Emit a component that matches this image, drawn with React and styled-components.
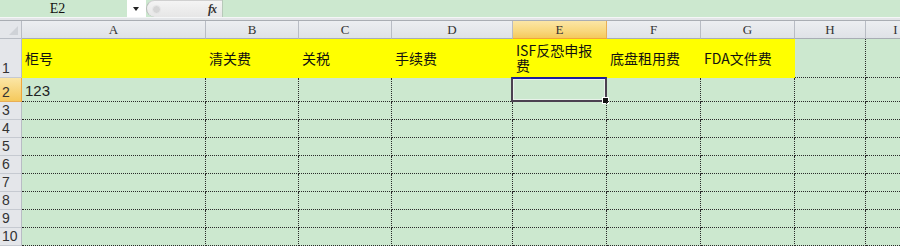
import React from 'react';
import styled, { createGlobalStyle, css } from 'styled-components';

const GlobalStyle = createGlobalStyle`
  html, body {
    margin: 0;
    padding: 0;
    background: #cce8cf;
    overflow: hidden;
  }
  body {
    font-family: "Liberation Sans", "Noto Sans CJK SC", sans-serif;
  }
`;

// widths of row header + columns A..I
const COLS = '22px 184px 93px 93px 121px 94px 94px 94px 71px 60px';
const LETTERS = ['A', 'B', 'C', 'D', 'E', 'F', 'G', 'H', 'I'];
const HEADERS = ['柜号', '清关费', '关税', '手续费', 'ISF反恐申报费', '底盘租用费', 'FDA文件费'];

const Sheet = styled.div`
  width: 900px;
  height: 246px;
  overflow: hidden;
  display: flex;
  flex-direction: column;
`;

const FormulaBar = styled.div`
  height: 17px;
  display: flex;
  align-items: stretch;
`;

const NameBox = styled.div`
  width: 127px;
  display: flex;
  align-items: center;
  justify-content: center;
  font-family: "Liberation Serif", serif;
  font-size: 14px;
  color: #111;
  padding-right: 12px;
  box-sizing: border-box;
`;

const DropZone = styled.div`
  width: 19px;
  background: #fff;
  display: flex;
  align-items: center;
  justify-content: center;
  padding-right: 2px;
  box-sizing: border-box;
`;

const Arrow = styled.div`
  width: 0;
  height: 0;
  border-left: 3.5px solid transparent;
  border-right: 3.5px solid transparent;
  border-top: 4px solid #222;
  margin-top: 1px;
`;

const FxPill = styled.div`
  width: 76px;
  background: linear-gradient(#f4f4f4, #e6e6e6);
  border-radius: 9px 0 0 9px;
  border-left: 1px solid #b9b9b9;
  border-top: 1px solid #d0d0d0;
  box-sizing: border-box;
  display: flex;
  align-items: center;
  justify-content: space-between;
  padding: 0 6px 0 5px;
`;

const Knob = styled.div`
  width: 7px;
  height: 7px;
  border-radius: 50%;
  background: #d5d5d5;
  border: 1px solid #e9e9e9;
`;

const Fx = styled.span`
  font-family: "Liberation Serif", serif;
  font-style: italic;
  font-weight: bold;
  font-size: 12px;
  color: #333;
  letter-spacing: -1px;
`;

const FormulaInput = styled.div`
  flex: 1;
  border-left: 1px solid #b7c9b9;
`;

const Separator = styled.div`
  height: 4px;
  background: #e3e5e8;
  border-top: 1px solid #f5f6f7;
  border-bottom: 1px solid #a9adb3;
  box-sizing: border-box;
`;

const Row = styled.div`
  display: grid;
  grid-template-columns: ${COLS};
  height: ${p => p.$h}px;
  flex-shrink: 0;
`;

const CornerCell = styled.div`
  position: relative;
  background: #e4e6ea;
  border-right: 1px solid #b8bcc4;
  border-bottom: 1px solid #b8bcc4;
  &::after {
    content: '';
    position: absolute;
    right: 3px;
    bottom: 3px;
    width: 0;
    height: 0;
    border-left: 9px solid transparent;
    border-bottom: 9px solid #cfd2d7;
  }
`;

const selectedHead = css`
  background: linear-gradient(#fbe6a6, #f8d77c 60%, #f5c95c);
  border-bottom-color: #f0a53a;
  border-right-color: #e9ae55;
`;

const ColHead = styled.div`
  background: linear-gradient(#eceef1, #dfe2e7);
  border-right: 1px solid #b8bcc4;
  border-bottom: 1px solid #a8adb5;
  display: flex;
  align-items: center;
  justify-content: center;
  font-family: "Liberation Serif", serif;
  font-size: 13px;
  color: #333;
  ${p => p.$sel && selectedHead}
`;

const RowHead = styled.div`
  background: #e4e6ea;
  border-right: 1px solid #b8bcc4;
  border-bottom: 1px solid #c6cad1;
  display: flex;
  align-items: flex-end;
  padding-left: 2px;
  font-family: "Liberation Sans", sans-serif;
  font-size: 14px;
  line-height: 17px;
  color: #333;
  ${p => p.$sel && css`
    background: linear-gradient(#fbe6a6, #f5c95c);
    border-bottom-color: #e9ae55;
    border-right-color: #f0a53a;
  `}
`;

const Cell = styled.div`
  position: relative;
  border-right: 1px dotted #2a2a2a;
  border-bottom: 1px dotted #2a2a2a;
  box-sizing: border-box;
  display: flex;
  align-items: ${p => (p.$center ? 'center' : 'flex-end')};
  padding: 0 2px 0 3px;
  font-size: 14px;
  line-height: 15px;
  color: #111;
  white-space: pre-wrap;
  overflow: visible;
  ${p => p.$yellow && css`
    background: #ffff00;
    border-color: transparent;
  `}
`;

const CellText = styled.span`
  font-family: "Noto Sans CJK SC", "Liberation Sans", sans-serif;
  word-break: break-all;
  margin-bottom: ${p => p.$mb || 0}px;
`;

const NumText = styled.span`
  font-family: "Liberation Sans", sans-serif;
  font-size: 15px;
  color: #222;
  margin-bottom: 3px;
`;

const Selection = styled.div`
  position: absolute;
  left: -2px;
  top: -1px;
  right: -1px;
  bottom: -1px;
  border: 2px solid #4b4150;
  border-top-color: #1e1e9c;
  box-shadow: inset 0 0 0 1px #e8f2ea;
  pointer-events: none;
  &::after {
    content: '';
    position: absolute;
    right: -4px;
    bottom: -4px;
    width: 5px;
    height: 5px;
    background: #111;
    border: 1px solid #fff;
  }
`;

function HeaderRow() {
  return (
    <Row $h={18}>
      <CornerCell />
      {LETTERS.map(l => (
        <ColHead key={l} $sel={l === 'E'}>{l}</ColHead>
      ))}
    </Row>
  );
}

function TitleRow() {
  return (
    <Row $h={39}>
      <RowHead>1</RowHead>
      {LETTERS.map((l, i) => (
        <Cell key={l} $yellow={i < 7} $center>
          {HEADERS[i] && <CellText>{HEADERS[i]}</CellText>}
        </Cell>
      ))}
    </Row>
  );
}

function DataRow({ n, h, selected }) {
  return (
    <Row $h={h}>
      <RowHead $sel={selected}>{n}</RowHead>
      {LETTERS.map((l, i) => (
        <Cell key={l}>
          {n === 2 && i === 0 && <NumText>123</NumText>}
          {n === 2 && l === 'E' && <Selection />}
        </Cell>
      ))}
    </Row>
  );
}

export default function App() {
  const rows = [3, 4, 5, 6, 7, 8, 9, 10];
  return (
    <>
      <GlobalStyle />
      <Sheet>
        <FormulaBar>
          <NameBox>E2</NameBox>
          <DropZone><Arrow /></DropZone>
          <FxPill>
            <Knob />
            <Fx>fx</Fx>
          </FxPill>
          <FormulaInput />
        </FormulaBar>
        <Separator />
        <HeaderRow />
        <TitleRow />
        <DataRow n={2} h={24} selected />
        {rows.map(n => <DataRow key={n} n={n} h={18} />)}
      </Sheet>
    </>
  );
}
